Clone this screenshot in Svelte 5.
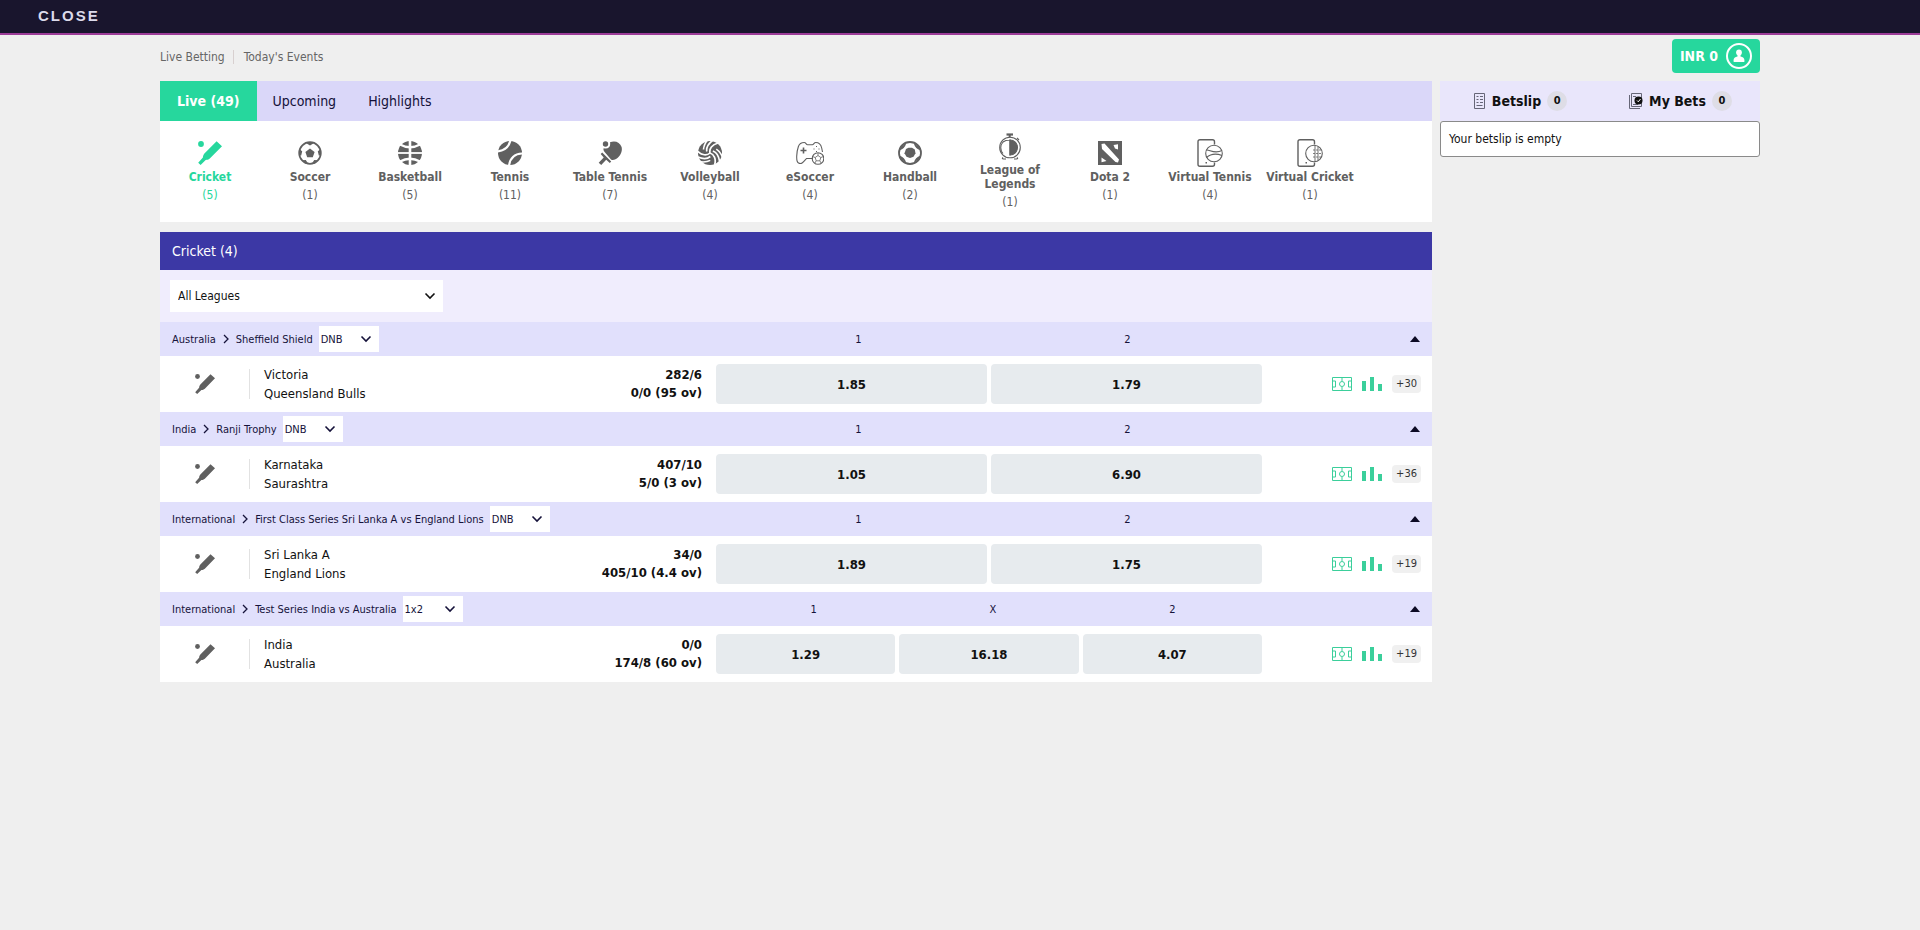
<script lang="ts">
	type Sport = { name: string; icon: string; count: number };

	type Match = {
		region: string;
		league: string;
		market: string;
		outcomes: string[];
		teams: string[];
		scores: string[];
		odds: string[];
		more: number;
	};

	const tabs = ['Live (49)', 'Upcoming', 'Highlights'];

	const sports: Sport[] = [
		{ name: 'Cricket', icon: 'cricket', count: 5 },
		{ name: 'Soccer', icon: 'soccer', count: 1 },
		{ name: 'Basketball', icon: 'basketball', count: 5 },
		{ name: 'Tennis', icon: 'tennis', count: 11 },
		{ name: 'Table Tennis', icon: 'table-tennis', count: 7 },
		{ name: 'Volleyball', icon: 'volleyball', count: 4 },
		{ name: 'eSoccer', icon: 'esoccer', count: 4 },
		{ name: 'Handball', icon: 'handball', count: 2 },
		{ name: 'League of Legends', icon: 'lol', count: 1 },
		{ name: 'Dota 2', icon: 'dota', count: 1 },
		{ name: 'Virtual Tennis', icon: 'virtual-tennis', count: 4 },
		{ name: 'Virtual Cricket', icon: 'virtual-cricket', count: 1 }
	];

	const matches: Match[] = [
		{
			region: 'Australia',
			league: 'Sheffield Shield',
			market: 'DNB',
			outcomes: ['1', '2'],
			teams: ['Victoria', 'Queensland Bulls'],
			scores: ['282/6', '0/0 (95 ov)'],
			odds: ['1.85', '1.79'],
			more: 30
		},
		{
			region: 'India',
			league: 'Ranji Trophy',
			market: 'DNB',
			outcomes: ['1', '2'],
			teams: ['Karnataka', 'Saurashtra'],
			scores: ['407/10', '5/0 (3 ov)'],
			odds: ['1.05', '6.90'],
			more: 36
		},
		{
			region: 'International',
			league: 'First Class Series Sri Lanka A vs England Lions',
			market: 'DNB',
			outcomes: ['1', '2'],
			teams: ['Sri Lanka A', 'England Lions'],
			scores: ['34/0', '405/10 (4.4 ov)'],
			odds: ['1.89', '1.75'],
			more: 19
		},
		{
			region: 'International',
			league: 'Test Series India vs Australia',
			market: '1x2',
			outcomes: ['1', 'X', '2'],
			teams: ['India', 'Australia'],
			scores: ['0/0', '174/8 (60 ov)'],
			odds: ['1.29', '16.18', '4.07'],
			more: 19
		}
	];

	let activeTab = $state('Live (49)');
	let activeSport = $state('Cricket');
	let collapsed: boolean[] = $state(matches.map(() => false));
</script>

{#snippet chevron()}
	<svg class="chevron" viewBox="0 0 12 12" aria-hidden="true">
		<path d="M1.500 3.500 6 8l4.500-4.500" fill="none" stroke="currentColor" stroke-width="1.600" />
	</svg>
{/snippet}

{#snippet sportIcon(name: string)}
	<svg class="sport-icon" viewBox="0 0 24 24" fill="currentColor" aria-hidden="true">
		{#if name === 'cricket'}
			<circle cx="3" cy="3" r="2.900" />
			<path d="M18.600.3 24 5.200 11.800 17.600c-1.400 1.200-2.500 1.300-4.100 1.500L2.600 24 .2 21.800l4.700-5.200c0-1.600.5-2.900 1.500-4.100z" />
		{:else if name === 'soccer'}
			<circle cx="12" cy="12" r="10.800" fill="none" stroke="currentColor" stroke-width="1.800" />
			<path d="m12 7.500 4.600 3.400-1.800 5.300H9.200l-1.800-5.300z" />
			<path d="M7.500 1.800h9L12 4.600zM1.200 8l3 2.300-1 4.200-2-.5zM22.800 8l-3 2.300 1 4.200 2-.5zM4.300 19.200l3.500-.3 2.200 3.700-3 .2zM19.700 19.200l-3.500-.3-2.200 3.700 3 .2z" />
		{:else if name === 'basketball'}
			<circle cx="12" cy="12" r="12" />
			<path d="M12-1v26" stroke="#fff" stroke-width="2.600" />
			<path d="M-1 12h26" stroke="#fff" stroke-width="1.800" />
			<path d="M2 3.500q10 5.500 20 0M2 20.500q10-5.500 20 0" fill="none" stroke="#fff" stroke-width="2.400" />
		{:else if name === 'tennis'}
			<circle cx="12" cy="12" r="12" />
			<path d="M-1 10.500C6 10 11 6 12.500-1M11 25C12 17 17 12.500 25 12.500" fill="none" stroke="#fff" stroke-width="2.200" />
		{:else if name === 'table-tennis'}
			<circle cx="7.500" cy="3" r="2.700" />
			<path d="M12 1.300C17-.7 22 1.200 23.600 6c1.200 5-1.800 10-6.600 12.600-1.300.6-2.800.8-4-.2L6.400 10.800C5.400 9.300 5.200 8.300 5.700 7.200 10 8.800 13 5.500 12 1.300z" />
			<path d="m4.200 11.500 9 9-1.400 1.400-3.600-3.200-5 5.300L.7 21.700l5-5.100-3-3.600z" />
		{:else if name === 'volleyball'}
			<circle cx="12" cy="12" r="12" />
			<g fill="none" stroke="#fff" stroke-width="1.700">
				{#each [0, 120, 240] as angle}
					<path d="M12 12C11 8 14 3.500 20 2M8.800 10.500C8 6 10 3 14.500-.5M5.500 8.500C5.500 5 6.500 3 9-.5" transform="rotate({angle} 12 12)" />
				{/each}
			</g>
		{/if}
	</svg>
{/snippet}

{#snippet wideIcon(name: string)}
	<svg class="wide-icon" viewBox="0 0 28 28" fill="none" stroke="currentColor" stroke-width="1.100" aria-hidden="true">
		{#if name === 'esoccer'}
			<path d="M17 19.500h-6.500C7 23.500 5.500 25.500 2.500 24-.5 22.500.8 12 2.400 7.500 3.400 4.500 5.600 3.500 8.300 3.500c1.700 0 1.700 2.200 3.300 2.200h4.700c1.500 0 1.700-2.200 3.400-2.200 3.600 0 5.200 2 6 5.500l.8 4" />
			<path d="M7.500 8.500v6M4.500 11.500h6" stroke-width="1.600" />
			<path d="M20 7.500h1M20 12.500h1M17.500 10h1M22.500 10h1" />
			<circle cx="22" cy="19.500" r="5.800" />
			<path d="m22 16.500 2.800 2-1 3.300h-3.600l-1-3.300zM22 14v2.500M24.800 18.500l2.700-1M23.800 21.800l1.500 2.500M20.200 21.800l-1.500 2.500M19.200 18.500l-2.700-1" stroke-width=".800" />
		{:else if name === 'handball'}
			<circle cx="14" cy="14" r="11" stroke-width="1.800" />
			<path d="m10 10 2.500-1.200h3.500l2.800 1.700.7 3.800-2 3.500-3.500 1.200-3.500-1.200-2-3.500z" fill="currentColor" stroke="none" />
			<path d="M3.500 10.500C7 9.500 8.500 7.500 9.500 4M24.500 10.500C21 9.500 19.500 7.500 18.500 4M3.500 17.500C7 18.500 8.500 20.500 9.500 24M24.500 17.500C21 18.500 19.500 20.500 18.500 24" stroke-width="1.600" />
			<path d="M3 11 7 8.500 8.500 4.500 5 6.500zM25 11l-4-2.500-1.500-4L23 6.500zM3 17l4 2.500 1.500 4L5 21.500zM25 17l-4 2.500-1.500 4 3.500-2z" fill="currentColor" stroke="none" />
		{:else if name === 'lol'}
			<circle cx="14" cy="15.500" r="10.300" />
			<path d="M14 8a7.500 7.500 0 0 1 0 15z" fill="currentColor" />
			<path d="M7 10a8.500 8.500 0 0 0 0 11.500M14 8c-3.500 0-5.500.7-7 2M14 7.500v16" />
			<path d="M10.500 2.500h6.500" stroke-width="2.200" />
			<path d="M13.700 2.500v3" stroke-width="2" />
			<path d="M7 25.500c-1 1-.8 1.500.5 1.500h2.500M21 25.500c1 1 .8 1.500-.5 1.500H18M21 6l2 2" />
		{:else if name === 'dota'}
			<path d="M2 2h24v24H2z" fill="currentColor" stroke="none" />
			<path d="m5.500 5 3-.5 14.500 16-1 3-2.500-.5L6 10zM17.500 6l4.500-.8v5.300l-3-1zM5.500 18.500l5 3.500-5 1.300z" fill="#fff" stroke="none" />
		{:else}
			<path d="M18.500 23.500v1.700q0 2-2 2H4q-2 0-2-2V2.800q0-2 2-2h12.500q2 0 2 2V5.500" stroke-width="1.400" />
			<path d="M9.500 23.800H11" stroke-width="1.600" />
			<circle cx="18" cy="14.500" r="8.300" />
			{#if name === 'virtual-tennis'}
				<path d="M10.500 11c3-.5 8 4.500 15.500.5M10.500 18.500c4-3.500 9-4.500 15.500-2" />
			{:else}
				<path d="M19 6.500v16M22 7.500v14" stroke-width=".900" />
				<path d="M17 11h8M17 14.500h9M17 18h8" stroke-width=".800" stroke-dasharray="2 1" />
			{/if}
		{/if}
	</svg>
{/snippet}

<header class="topbar">
	<button class="close" type="button">CLOSE</button>
</header>

<div class="page">
	<div class="subheader">
		<nav class="links">
			<a href="#live">Live Betting</a>
			<a href="#today">Today's Events</a>
		</nav>
		<button class="balance" type="button">
			<span>INR 0</span>
			<svg viewBox="0 0 26 26" aria-hidden="true">
				<circle cx="13" cy="13" r="12" fill="none" stroke="#fff" stroke-width="2" />
				<circle cx="13" cy="9.500" r="2.900" fill="#fff" />
				<path d="M11.500 11.500h3v2c2.500.3 4 1.500 4 4.500 0 .7-.3 1-1 1h-9c-.7 0-1-.3-1-1 0-3 1.500-4.200 4-4.500z" fill="#fff" />
			</svg>
		</button>
	</div>

	<div class="columns">
		<main>
			<div class="tabs">
				{#each tabs as tab}
					<button type="button" class:active={tab === activeTab} onclick={() => (activeTab = tab)}>{tab}</button>
				{/each}
			</div>

			<div class="sports">
				{#each sports as sport, i}
					<button
						type="button"
						class="sport"
						class:active={sport.name === activeSport}
						onclick={() => (activeSport = sport.name)}
					>
						<span class="icon-box">
							{#if i < 6}
								{@render sportIcon(sport.icon)}
							{:else}
								{@render wideIcon(sport.icon)}
							{/if}
						</span>
						<span class="name">{sport.name}</span>
						<span class="count">({sport.count})</span>
					</button>
				{/each}
			</div>

			<section class="events">
				<h1>Cricket (4)</h1>

				<div class="filter">
					<div class="select-box league-select">
						<select aria-label="League">
							<option>All Leagues</option>
							{#each matches as match}
								<option>{match.league}</option>
							{/each}
						</select>
						{@render chevron()}
					</div>
				</div>

				{#each matches as match, i}
					<div class="league">
						<div class="league-name">
							<span>{match.region}</span>
							<svg class="arrow" viewBox="0 0 8 10" aria-hidden="true">
								<path d="m2 1 4 4-4 4" fill="none" stroke="currentColor" stroke-width="1.300" />
							</svg>
							<span>{match.league}</span>
							<div class="select-box market-select">
								<select aria-label="Market for {match.league}" value={match.market}>
									<option>DNB</option>
									<option>1x2</option>
								</select>
								{@render chevron()}
							</div>
						</div>
						<div class="outcomes">
							{#each match.outcomes as outcome}
								<span>{outcome}</span>
							{/each}
						</div>
						<button
							type="button"
							class="toggle"
							class:collapsed={collapsed[i]}
							aria-label="Toggle {match.league}"
							onclick={() => (collapsed[i] = !collapsed[i])}
						>
							<svg viewBox="0 0 10 6" aria-hidden="true"><path d="m0 6 5-6 5 6z" fill="currentColor" /></svg>
						</button>
					</div>

					{#if !collapsed[i]}
						<div class="match">
							<div class="info">
								<div class="match-icon">{@render sportIcon('cricket')}</div>
								<div class="teams">
									{#each match.teams as team}
										<div>{team}</div>
									{/each}
								</div>
								<div class="scores">
									{#each match.scores as score}
										<div>{score}</div>
									{/each}
								</div>
							</div>
							<div class="odds">
								{#each match.odds as odd}
									<button type="button">{odd}</button>
								{/each}
							</div>
							<div class="extras">
								<svg class="pitch" viewBox="0 0 20 14" fill="none" stroke="currentColor" aria-hidden="true">
									<path d="M.5.500h19v13H.5zM10 .5v3.500M10 10v3.500M.5 4H3.500v6H.5M19.500 4H16.500v6h3" />
									<circle cx="10" cy="7" r="2.500" />
								</svg>
								<svg class="bars" viewBox="0 0 20 14" fill="currentColor" aria-hidden="true">
									<path d="M0 4h4v10H0zM8 0h4v14H8zM16 7h4v7h-4z" />
								</svg>
								<a class="more" href="#match-{i}">+{match.more}</a>
							</div>
						</div>
					{/if}
				{/each}
			</section>
		</main>

		<aside>
			<div class="slip-tabs">
				<button type="button">
					<svg class="slip-icon" viewBox="0 0 13 16" fill="none" stroke="#667" aria-hidden="true">
						<path d="M1.500.500h10v15h-10z" />
						<path d="M3.500 3.500h2M7 3.500h3M3.500 6.500h2M7 6.500h3M3.500 9.500h2M7 9.500h3M3.500 12.500h6" />
					</svg>
					<span>Betslip</span>
					<span class="badge">0</span>
				</button>
				<button type="button">
					<svg class="bets-icon" viewBox="0 0 15 16" fill="none" stroke="#667" aria-hidden="true">
						<path d="M3.500.500h10v13h-10zM1.500 2v13.500H12M5 3.500h3M5 11.500h5" />
						<circle cx="10.500" cy="7.500" r="4" fill="#111" stroke="none" />
						<path d="m9 7.500 1.300 1.300L12.500 6" stroke="#fff" />
					</svg>
					<span>My Bets</span>
					<span class="badge">0</span>
				</button>
			</div>
			<div class="slip-empty">Your betslip is empty</div>
		</aside>
	</div>
</div>

<style>
	:global(body) {
		margin: 0;
		background: #efefef;
		font-family: Tahoma, 'DejaVu Sans Condensed', 'Noto Sans', sans-serif;
		font-size: 12px;
		color: #111;
	}

	button,
	select {
		font: inherit;
		color: inherit;
		border: 0;
		margin: 0;
		padding: 0;
		background: none;
	}

	button {
		cursor: pointer;
	}

	a {
		color: inherit;
		text-decoration: none;
	}

	svg {
		display: block;
		flex: none;
	}

	.topbar {
		display: flex;
		align-items: center;
		height: 33px;
		padding: 0 38px;
		background: #19152d;
		border-bottom: 2px solid #9c3c98;
	}

	.close {
		font-family: 'Liberation Sans', Arial, sans-serif;
		font-size: 15px;
		font-weight: bold;
		letter-spacing: 2px;
		line-height: 30px;
		padding-bottom: 2px;
		color: #dcdaea;
	}

	.page {
		max-width: 1600px;
		margin: 0 auto;
	}

	.subheader {
		display: flex;
		justify-content: space-between;
		align-items: flex-start;
		padding: 4px 0 6px;
	}

	.links {
		display: flex;
		align-items: center;
		height: 36px;
		color: #666;
	}

	.links a + a {
		margin-left: 8px;
		padding-left: 10px;
		border-left: 1px solid #d8d0d0;
	}

	.balance {
		display: flex;
		align-items: center;
		gap: 8px;
		height: 34px;
		padding: 0 8px;
		border-radius: 4px;
		background: #26d79d;
		color: #fff;
		font-size: 14px;
		font-weight: bold;
	}

	.balance svg {
		width: 26px;
		height: 26px;
	}

	.columns {
		display: flex;
		align-items: flex-start;
		gap: 8px;
	}

	main {
		flex: 1;
		min-width: 0;
	}

	.tabs {
		display: flex;
		height: 40px;
		background: #dad7f9;
	}

	.tabs button {
		padding: 0 16px;
		font-size: 14px;
		color: #15123a;
	}

	.tabs button.active {
		padding: 0 17px;
		background: #26d79d;
		color: #fff;
		font-weight: bold;
	}

	.sports {
		display: flex;
		min-height: 101px;
		background: #fff;
	}

	.sport {
		display: flex;
		flex-direction: column;
		align-items: center;
		justify-content: center;
		flex: 0 1 100px;
		min-width: 0;
		line-height: 14px;
		color: #606060;
	}

	.sport.active {
		color: #26d79d;
	}

	.icon-box {
		display: flex;
		align-items: center;
		height: 24px;
		margin-bottom: 5px;
	}

	.sport-icon {
		width: 24px;
		height: 24px;
	}

	.wide-icon {
		width: 28px;
		height: 28px;
	}

	.name {
		font-weight: bold;
	}

	.count {
		margin-top: 4px;
		font-size: 12px;
	}

	.events {
		margin-top: 10px;
	}

	h1 {
		margin: 0;
		padding: 0 12px;
		background: #3c38a5;
		color: #fff;
		font-size: 14px;
		font-weight: normal;
		line-height: 38px;
	}

	.filter {
		padding: 10px;
		background: #f0edfd;
	}

	.select-box {
		position: relative;
		background: #fff;
	}

	.select-box select {
		appearance: none;
		width: 100%;
		height: 100%;
	}

	.chevron {
		position: absolute;
		top: 50%;
		right: 7px;
		width: 12px;
		height: 12px;
		margin-top: -6px;
		pointer-events: none;
	}

	.league-select {
		width: 273px;
		height: 32px;
	}

	.league-select select {
		padding: 0 8px;
	}

	.market-select {
		width: 60px;
		height: 26px;
		margin-left: 6px;
	}

	.market-select select {
		padding: 0 2px;
	}

	.league {
		display: grid;
		grid-template-columns: 564fr 538fr 170fr;
		align-items: center;
		height: 34px;
		background: #e1e0fc;
		color: #15123a;
		font-size: 11px;
	}

	.league-name {
		display: flex;
		align-items: center;
		padding-left: 12px;
		white-space: nowrap;
	}

	.arrow {
		width: 8px;
		height: 10px;
		margin: 0 6px;
	}

	.outcomes {
		display: flex;
	}

	.outcomes span {
		flex: 1;
		text-align: center;
	}

	.toggle {
		justify-self: end;
		padding: 8px 12px;
		color: #0c0a24;
	}

	.toggle svg {
		width: 10px;
		height: 6px;
	}

	.toggle.collapsed svg {
		transform: rotate(180deg);
	}

	.match {
		display: grid;
		grid-template-columns: 556fr 546fr 170fr;
		align-items: center;
		height: 56px;
		background: #fff;
	}

	.info {
		display: flex;
		align-items: center;
		padding-right: 14px;
		font-size: 13px;
	}

	.match-icon {
		display: flex;
		align-items: center;
		justify-content: center;
		width: 89px;
		height: 30px;
		border-right: 1px solid #e2e2e2;
		color: #606060;
	}

	.match-icon .sport-icon {
		width: 20px;
		height: 20px;
	}

	.teams {
		flex: 1;
		padding-left: 14px;
		line-height: 19px;
	}

	.scores {
		font-weight: bold;
		line-height: 18px;
		text-align: right;
	}

	.odds {
		display: flex;
		gap: 4px;
	}

	.odds button {
		flex: 1;
		height: 40px;
		border-radius: 4px;
		background: #e7ebee;
		font-size: 13px;
		font-weight: bold;
	}

	.extras {
		display: flex;
		align-items: center;
		justify-content: flex-end;
		gap: 10px;
		padding-right: 11px;
		color: #3bcf9b;
	}

	.pitch,
	.bars {
		width: 20px;
		height: 14px;
	}

	.more {
		padding: 0 4px;
		border-radius: 4px;
		background: #f0f0f0;
		color: #333;
		font-size: 11px;
		line-height: 18px;
	}

	aside {
		flex: 0 0 20%;
	}

	.slip-tabs {
		display: flex;
		height: 40px;
		background: #e9e6fb;
	}

	.slip-tabs button {
		display: flex;
		flex: 1;
		align-items: center;
		justify-content: center;
		gap: 6px;
		font-size: 14px;
		font-weight: bold;
	}

	.slip-icon {
		width: 13px;
		height: 16px;
	}

	.bets-icon {
		width: 15px;
		height: 16px;
	}

	.badge {
		width: 20px;
		border-radius: 10px;
		background: #dedde6;
		font-size: 11px;
		line-height: 20px;
		text-align: center;
	}

	.slip-empty {
		padding: 0 8px;
		border: 1px solid #8a8a8a;
		border-radius: 3px;
		background: #fff;
		line-height: 34px;
	}
</style>
